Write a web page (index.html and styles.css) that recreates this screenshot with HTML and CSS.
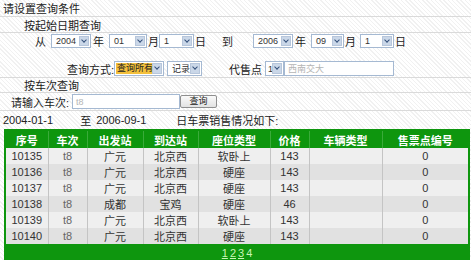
FILE: index.html
```html
<!DOCTYPE html>
<html lang="zh-CN">
<head>
  <meta charset="UTF-8">
  <title>车票销售查询</title>
  <link rel="stylesheet" href="styles.css">
</head>
<body>
  <div class="panel">
    <div class="row title">请设置查询条件</div>
    <div class="row sub">按起始日期查询</div>
    <div class="row dates">
      <div class="date-line">
        <span class="lbl from">从</span>
        <span class="sel w40">2004<i class="arrow"></i></span><span class="unit year">年</span>
        <span class="sel w38">01<i class="arrow"></i></span><span class="unit month">月</span>
        <span class="sel w35">1<i class="arrow"></i></span><span class="unit day">日</span>
        <span class="lbl to">到</span>
        <span class="sel w40">2006<i class="arrow"></i></span><span class="unit year">年</span>
        <span class="sel w33">09<i class="arrow"></i></span><span class="unit month">月</span>
        <span class="sel w34 late">1<i class="arrow"></i></span><span class="unit day">日</span>
      </div>
      <div class="mode-line">
        <span class="lbl">查询方式:</span>
        <span class="sel w50"><em class="picked">查询所有</em><i class="arrow"></i></span>
        <span class="sel w35 gap">记录<i class="arrow"></i></span>
        <span class="lbl agent">代售点</span>
        <span class="sel w19">1<i class="arrow"></i></span>
        <span class="field w110 hint">西南交大</span>
      </div>
    </div>
    <div class="row sub short">按车次查询</div>
    <div class="row train">
      <span class="lbl">请输入车次:</span>
      <span class="field w108 hint">t8</span>
      <button type="button" class="btn">查询</button>
    </div>
    <div class="summary">
      <span class="d1">2004-01-1</span>
      <span class="d2">至</span>
      <span class="d3">2006-09-1</span>
      <span class="d4">日车票销售情况如下:</span>
    </div>
  </div>

  <table class="result">
    <colgroup>
      <col style="width:43px"><col style="width:39px"><col style="width:56px"><col style="width:55px">
      <col style="width:72px"><col style="width:39px"><col style="width:73px"><col style="width:87px">
    </colgroup>
    <thead>
      <tr><th>序号</th><th>车次</th><th>出发站</th><th>到达站</th><th>座位类型</th><th>价格</th><th>车辆类型</th><th>售票点编号</th></tr>
    </thead>
    <tbody>
      <tr><td>10135</td><td class="code">t8</td><td>广元</td><td>北京西</td><td>软卧上</td><td>143</td><td></td><td>0</td></tr>
      <tr><td>10136</td><td class="code">t8</td><td>广元</td><td>北京西</td><td>硬座</td><td>143</td><td></td><td>0</td></tr>
      <tr><td>10137</td><td class="code">t8</td><td>广元</td><td>北京西</td><td>硬座</td><td>143</td><td></td><td>0</td></tr>
      <tr><td>10138</td><td class="code">t8</td><td>成都</td><td>宝鸡</td><td>硬座</td><td>46</td><td></td><td>0</td></tr>
      <tr><td>10139</td><td class="code">t8</td><td>广元</td><td>北京西</td><td>软卧上</td><td>143</td><td></td><td>0</td></tr>
      <tr><td>10140</td><td class="code">t8</td><td>广元</td><td>北京西</td><td>硬座</td><td>143</td><td></td><td>0</td></tr>
    </tbody>
    <tfoot>
      <tr><td colspan="8" class="pager"><a href="#">1</a><a href="#">2</a><a href="#">3</a><span>4</span></td></tr>
    </tfoot>
  </table>
</body>
</html>
```

FILE: styles.css
```css
body {
  margin: 0;
  width: 471px;
  height: 260px;
  overflow: hidden;
  font-family: "Liberation Sans", "Noto Sans CJK SC", sans-serif;
  font-size: 11px;
  color: #222;
  background-color: #fff;
  background-image: repeating-linear-gradient(45deg, #fff 0, #fff 2px, #f1f1f1 2px, #f1f1f1 3px);
}
.panel {
  width: 471px;
}
.row {
  display: flex;
  align-items: center;
  box-sizing: border-box;
  border-bottom: 1px solid #dadada;
}
.title {
  height: 17px;
  padding-left: 3px;
}
.sub {
  height: 16px;
  padding-left: 24px;
}
.sub.short {
  height: 15px;
}
.dates {
  height: 45px;
  flex-direction: column;
  align-items: stretch;
}
.date-line, .mode-line {
  display: flex;
  align-items: center;
}
.date-line {
  height: 14px;
  margin-top: 1px;
  padding-left: 35px;
}
.mode-line {
  height: 15px;
  margin-top: 13px;
  padding-left: 67px;
}
.lbl.from {
  margin-right: 5px;
}
.lbl.to {
  margin-left: 16px;
  margin-right: 20px;
}
.lbl.agent {
  margin-left: 27px;
  margin-right: 3px;
}
.unit.year {
  margin: 0 5px 0 2px;
}
.unit.month {
  margin: 0 0 0 1px;
}
.unit.day {
  margin: 0 0 0 1px;
}
.sel.late {
  margin-left: 4px;
}
.sel {
  position: relative;
  display: inline-flex;
  align-items: center;
  box-sizing: border-box;
  height: 14px;
  padding-left: 4px;
  border: 1px solid #a5b9d2;
  background: #fff;
  font-size: 9px;
  color: #333;
}
.sel .arrow {
  position: absolute;
  right: 1px;
  top: 1px;
  width: 10px;
  height: 10px;
  background: #cad7e8;
  border: 1px solid #b7c6db;
  box-sizing: border-box;
}
.sel .arrow::after {
  content: "";
  position: absolute;
  left: 2px;
  top: 1px;
  width: 3px;
  height: 3px;
  border-right: 1.5px solid #34507a;
  border-bottom: 1.5px solid #34507a;
  transform: rotate(45deg);
}
.w40 { width: 40px; }
.w38 { width: 38px; }
.w35 { width: 35px; }
.w34 { width: 34px; }
.w33 { width: 33px; }
.w50 { width: 50px; padding-left: 1px; }
.w19 { width: 19px; padding-left: 2px; }
.sel.w50, .sel.gap, .sel.w19 {
  height: 15px;
}
.sel.w50 .arrow, .sel.gap .arrow, .sel.w19 .arrow {
  height: 11px;
}
.sel.gap {
  margin-left: 3px;
}
.picked {
  font-style: normal;
  background: #f3c03c;
  color: #222;
  padding: 0 1px;
  line-height: 11px;
}
.field {
  display: inline-flex;
  align-items: center;
  box-sizing: border-box;
  height: 15px;
  padding-left: 3px;
  border: 1px solid #a5b9d2;
  background: #fff;
  font-size: 9px;
}
.hint {
  color: #b5b5b5;
}
.w110 { width: 110px; }
.w108 { width: 108px; }
.train {
  height: 18px;
  padding-left: 11px;
}
.train .lbl {
  margin-right: 3px;
}
.btn {
  box-sizing: border-box;
  height: 13px;
  width: 37px;
  padding: 0;
  font-family: inherit;
  font-size: 9px;
  line-height: 11px;
  color: #222;
  background: linear-gradient(#fafafa, #e2e2e2);
  border: 1px solid #8f8f8f;
  border-radius: 2px;
}
.summary {
  display: flex;
  align-items: center;
  height: 17px;
  padding-left: 3px;
}
.d2 { margin-left: 27px; }
.d3 { margin-left: 5px; }
.d4 { margin-left: 30px; }
.result {
  margin: 1px 0 0 4px;
  width: 466px;
  table-layout: fixed;
  border-collapse: collapse;
  border: 2px solid #0e960e;
  font-size: 11px;
}
.result th {
  height: 17px;
  padding: 0;
  background: #0e960e;
  color: #fff;
  font-weight: bold;
  font-size: 11px;
  border-left: 1px solid #3aab3a;
}
.result td {
  height: 16px;
  padding: 0;
  text-align: center;
  color: #333;
  border-left: 1px solid #c4c4c4;
  background: #efefef;
}
.result tbody tr:nth-child(even) td {
  background: #e1e1e1;
}
.result td.code {
  color: #666;
}
.result td.pager {
  height: 17px;
  background: #0e960e;
  border-left: none;
  font-size: 11px;
  vertical-align: middle;
}
.pager a, .pager span {
  margin: 0 1px;
  color: #c8f5b4;
}
.pager a {
  text-decoration: underline;
}
```
